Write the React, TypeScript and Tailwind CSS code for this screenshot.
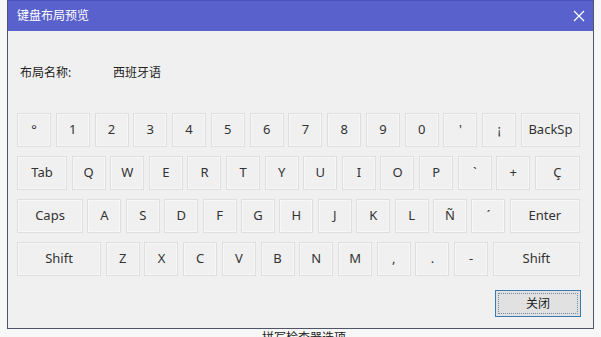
import React from "react";

const rows: { label: string; w?: number }[][] = [
  [
    { label: "°" }, { label: "1" }, { label: "2" }, { label: "3" }, { label: "4" },
    { label: "5" }, { label: "6" }, { label: "7" }, { label: "8" }, { label: "9" },
    { label: "0" }, { label: "'" }, { label: "¡" }, { label: "BackSp", w: 59 },
  ],
  [
    { label: "Tab", w: 50 }, { label: "Q" }, { label: "W" }, { label: "E" }, { label: "R" },
    { label: "T" }, { label: "Y" }, { label: "U" }, { label: "I" }, { label: "O" },
    { label: "P" }, { label: "`" }, { label: "+" }, { label: "Ç", w: 45 },
  ],
  [
    { label: "Caps", w: 66 }, { label: "A" }, { label: "S" }, { label: "D" }, { label: "F" },
    { label: "G" }, { label: "H" }, { label: "J" }, { label: "K" }, { label: "L" },
    { label: "Ñ" }, { label: "´" }, { label: "Enter", w: 70 },
  ],
  [
    { label: "Shift", w: 84 }, { label: "Z" }, { label: "X" }, { label: "C" }, { label: "V" },
    { label: "B" }, { label: "N" }, { label: "M" }, { label: "," }, { label: "." },
    { label: "-" }, { label: "Shift", w: 87 },
  ],
];

const Key = ({ label, w }: { label: string; w?: number }) => (
  <div
    className="h-[34px] flex items-center justify-center border border-[#dedede] shadow-[inset_0_0_0_1px_#f7f7f7] bg-[#f0f0f0] text-[13px] text-[#333]"
    style={{ width: w ?? 34 }}
  >
    {label}
  </div>
);

export default function App() {
  return (
    <div
      className="w-[601px] h-[337px] overflow-hidden bg-[#f7f7f8]"
      style={{ fontFamily: '"Noto Sans", "Noto Sans CJK SC", sans-serif' }}
    >
      <div className="ml-[7px] w-[587px] h-[329px] flex flex-col border-x border-b border-[#4f5468] bg-[#f0f0f0]">
        <div className="h-[31px] shrink-0 flex items-center justify-between pl-[9px] pr-[8px] bg-[#5961cc] border-t border-[#4a51bf]">
          <span className="text-[12px] text-white">键盘布局预览</span>
          <svg width="12" height="12" viewBox="0 0 12 12" className="text-white">
            <path d="M1 1 L11 11 M11 1 L1 11" stroke="currentColor" strokeWidth="1.3" />
          </svg>
        </div>
        <div className="flex items-center h-[20px] mt-[32px] pl-[12px] text-[12px] text-[#222]">
          <span className="w-[93px]">布局名称:</span>
          <span>西班牙语</span>
        </div>
        <div className="flex flex-col gap-[9px] mt-[30px] pl-[9px] w-[572px]">
          {rows.map((row, i) => (
            <div key={i} className="flex justify-between w-[563px]">
              {row.map((k, j) => (
                <Key key={j} label={k.label} w={k.w} />
              ))}
            </div>
          ))}
        </div>
        <div className="flex justify-end w-[573px] mt-[14px]">
          <button className="w-[86px] h-[27px] p-[2px] bg-[#e1e1e1] border border-[#3b7ab0]">
            <div className="w-full h-full flex items-center justify-center border border-dotted border-[#6a8aa8] text-[12px] text-[#222]">
              关闭
            </div>
          </button>
        </div>
      </div>
      <div className="ml-[262px] mt-[3px] text-[12px] leading-none text-[#222]">拼写检查器选项</div>
    </div>
  );
}
